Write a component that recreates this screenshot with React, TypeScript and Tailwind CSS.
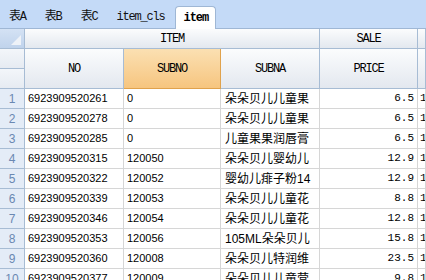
const rows = [
  ["6923909520261", "0", "朵朵贝儿儿童果", "6.5"],
  ["6923909520278", "0", "朵朵贝儿儿童果", "6.5"],
  ["6923909520285", "0", "儿童果果润唇膏", "6.5"],
  ["6923909520315", "120050", "朵朵贝儿婴幼儿", "12.9"],
  ["6923909520322", "120052", "婴幼儿痱子粉14", "12.9"],
  ["6923909520339", "120053", "朵朵贝儿儿童花", "8.8"],
  ["6923909520346", "120054", "朵朵贝儿儿童花", "12.8"],
  ["6923909520353", "120056", "105ML朵朵贝儿", "15.8"],
  ["6923909520360", "120008", "朵朵贝儿特润维", "23.5"],
  ["6923909520377", "120009", "朵朵贝儿儿童营", "9.8"],
];

const mono = { fontFamily: '"Liberation Mono", "Noto Sans CJK SC", monospace' };
const sans = { fontFamily: '"Liberation Sans", "Noto Sans CJK SC", sans-serif' };

const head =
  "flex items-center justify-center border-r border-b border-[#a7bcd4] bg-gradient-to-b from-[#fbfcfd] to-[#e3e8ef] text-[12px] text-black tracking-[-1.2px]";

function Tabs() {
  const tabs = ["表A", "表B", "表C", "item_cls"];
  return (
    <div className="h-[29px] flex items-end gap-[19px] bg-[#c4daf7] border-b border-[#9fb7d5] pl-[9px]" style={mono}>
      {tabs.map((t) => (
        <div key={t} className="h-[23px] flex items-center text-[12px] text-[#111] tracking-[-1.2px]">
          {t}
        </div>
      ))}
      <div className="h-[23px] -ml-[8px] -mb-px px-[7px] flex items-center rounded-t-[4px] border border-b-0 border-[#9fb7d5] bg-white text-[12px] font-bold text-black tracking-[-1px]">
        item
      </div>
    </div>
  );
}

export default function App() {
  return (
    <div className="w-[426px] h-[280px] overflow-hidden bg-white">
      <Tabs />
      <div className="grid grid-cols-[25px_99px_97px_99px_98px_1fr] auto-rows-[20px]" style={mono}>
        {/* header row 1 */}
        <div className="relative border-r border-b border-[#a7bcd4] bg-gradient-to-b from-[#d4e2f4] to-[#c0d3ec]">
          <div className="absolute right-[3px] bottom-[3px] w-0 h-0 border-l-[10px] border-l-transparent border-b-[10px] border-b-[#eef2f8]" />
        </div>
        <div className={`${head} col-span-3`}>ITEM</div>
        <div className={head}>SALE</div>
        <div className={head} />

        {/* header row 2 */}
        <div className="border-r border-b border-[#a7bcd4] bg-gradient-to-b from-[#f3f6fa] to-[#e6ebf2]" />
        <div className={`${head} row-span-2`}>NO</div>
        <div className="row-span-2 flex items-center justify-center border-r border-b border-[#e0a24c] bg-gradient-to-b from-[#fbe0b2] to-[#f6c57f] text-[12px] text-black tracking-[-1.2px]">
          SUBNO
        </div>
        <div className={`${head} row-span-2`}>SUBNA</div>
        <div className={`${head} row-span-2`}>PRICE</div>
        <div className={`${head} row-span-2`} />
        <div className="border-r border-b border-[#a7bcd4] bg-gradient-to-b from-[#f3f6fa] to-[#e6ebf2]" />

        {rows.map((r, i) => (
          <Row key={i} n={i + 1} r={r} />
        ))}
      </div>
    </div>
  );
}

function Row({ n, r }: { n: number; r: string[] }) {
  const cell = "flex items-center border-r border-b border-[#d6d6d6] overflow-hidden whitespace-nowrap text-black";
  return (
    <>
      <div className="flex items-center justify-center border-r border-b border-[#a7bcd4] bg-[#e4ecf7] text-[12px] text-[#6a88b2]" style={sans}>
        {n}
      </div>
      <div className={`${cell} pl-[3px] text-[11px]`} style={sans}>{r[0]}</div>
      <div className={`${cell} pl-[3px] text-[11px]`} style={sans}>{r[1]}</div>
      <div className={`${cell} pl-[4px] text-[12px]`} style={sans}>{r[2]}</div>
      <div className={`${cell} justify-end pr-[3px] text-[11px]`} style={mono}>{r[3]}</div>
      <div className={`${cell} pl-[2px] text-[11px]`} style={mono}>1</div>
    </>
  );
}
